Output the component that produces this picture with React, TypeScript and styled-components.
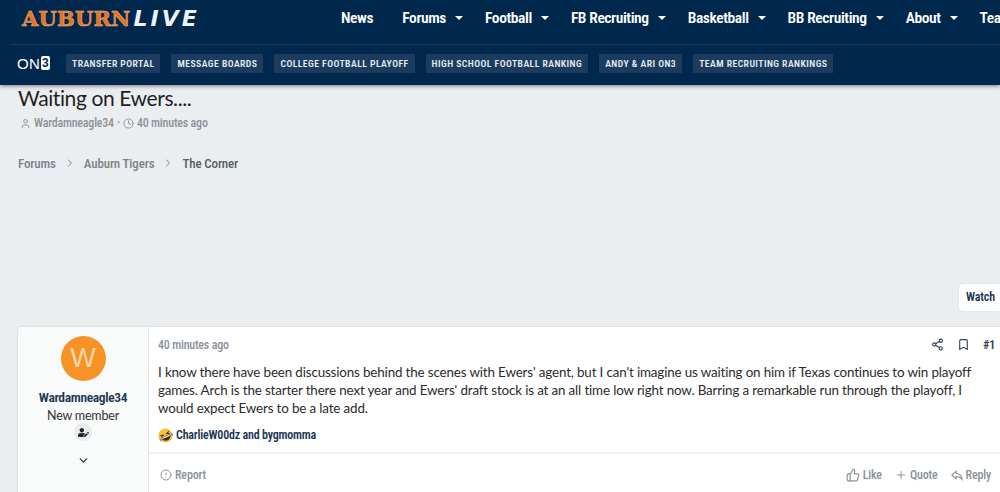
import React from "react";
import styled, { createGlobalStyle } from "styled-components";
import { Bookmark, ChevronDown, ChevronRight, CircleAlert, Clock, Plus, Share2, ThumbsUp, User } from "lucide-react";
import { FaUserEdit } from "react-icons/fa";

const narrow = `"Roboto", "Liberation Sans", sans-serif`;
const body = `"Lato", "Open Sans", sans-serif`;

const Global = createGlobalStyle`
  html, body {
    margin: 0;
    height: 492px;
    overflow: hidden;
    background: #ebeef1;
  }
  * { box-sizing: border-box; }
`;

const Header = styled.header`
  position: relative;
  z-index: 2;
  height: 85px;
  padding: 0 0 0 11px;
  background: #00274c;
  box-shadow: 0 1px 4px rgba(0, 0, 0, 0.5);
  overflow: hidden;
`;

const TopRow = styled.div`
  display: flex;
  align-items: center;
  height: 45px;
  padding: 0 0 8px 11px;
  border-bottom: 1px solid #1b3c5f;
  white-space: nowrap;
`;

const Logo = styled.div`
  display: flex;
  align-items: baseline;
  width: 319px;
  flex: none;
`;

const LogoMain = styled.span`
  font: 900 21px "DejaVu Serif", serif;
  letter-spacing: 0.2px;
  color: #e8721c;
  -webkit-text-stroke: 0.5px #f0b98c;
`;

const LogoLive = styled.span`
  margin-left: 3px;
  font: italic 800 22px "DejaVu Sans", sans-serif;
  letter-spacing: 3px;
  color: #eef2f6;
`;

const Nav = styled.nav`
  display: flex;
  align-items: center;
  gap: 22px;
  font: 600 15.5px ${narrow};
  font-stretch: 75%;
  letter-spacing: -0.4px;
  color: #fff;
`;

const NavItem = styled.a`
  display: flex;
  align-items: center;
  gap: 9px;

  &:first-child {
    margin-right: 7px;
  }
`;

const Caret = styled.i`
  width: 0;
  height: 0;
  border-left: 4px solid transparent;
  border-right: 4px solid transparent;
  border-top: 4px solid #fff;
`;

const SubRow = styled.div`
  display: flex;
  align-items: center;
  gap: 11px;
  height: 40px;
  padding: 0 0 4px 6px;
`;

const On3 = styled.div`
  display: flex;
  align-items: center;
  width: 38px;
  flex: none;
  font: 400 15px "Liberation Sans", sans-serif;
  letter-spacing: 0.3px;
  color: #fff;
`;

const On3Mark = styled.b`
  margin-left: 1px;
  padding: 0 1px;
  border-radius: 2px;
  background: #fff;
  color: #00274c;
  font: 800 12px/14px "Liberation Sans", sans-serif;
`;

const Pill = styled.a`
  height: 19px;
  padding: 0 6px;
  background: #1b3c5f;
  font: 600 9.7px/19px ${narrow};
  font-stretch: 75%;
  letter-spacing: 0.45px;
  color: #e6ebf0;
  white-space: nowrap;
`;

const Page = styled.main`
  padding-left: 18px;
`;

const Title = styled.h1`
  margin: 0;
  font: 400 21px/26px ${body};
  letter-spacing: -0.4px;
  color: #1f1f1f;
`;

const Meta = styled.div`
  display: flex;
  align-items: center;
  gap: 3px;
  margin-top: 4px;
  height: 16px;
  padding-left: 2px;
  font: 500 12px ${narrow};
  font-stretch: 75%;
  letter-spacing: -0.2px;
  color: #8b9199;
  svg { flex: none; }
`;

const Crumbs = styled.div`
  display: flex;
  align-items: center;
  gap: 8px;
  margin-top: 23px;
  height: 18px;
  font: 500 13px ${narrow};
  font-stretch: 75%;
  letter-spacing: -0.15px;
  color: #7b828a;
`;

const Current = styled.span`
  color: #575e66;
`;

const WatchRow = styled.div`
  display: flex;
  justify-content: flex-end;
  margin-top: 112px;
`;

const Watch = styled.a`
  width: 41px;
  height: 27px;
  padding-left: 7px;
  border-radius: 4px 0 0 4px;
  background: #fff;
  box-shadow: 0 0 1px rgba(0, 0, 0, 0.2);
  font: 600 12px/27px ${narrow};
  font-stretch: 75%;
  letter-spacing: -0.1px;
  color: #1b3552;
`;

const Card = styled.article`
  display: flex;
  height: 170px;
  margin-top: 16px;
  border-radius: 4px 0 0 0;
  background: #fff;
  box-shadow: 0 0 2px rgba(0, 0, 0, 0.18);
  overflow: hidden;
`;

const Side = styled.aside`
  display: flex;
  flex-direction: column;
  align-items: center;
  width: 131px;
  flex: none;
  padding-top: 9px;
  background: #f9fafa;
  border-right: 1px solid #e6e9ec;
`;

const Avatar = styled.div`
  width: 45px;
  height: 45px;
  border-radius: 50%;
  background: #f79226;
  font: 400 27px/45px "Liberation Sans", sans-serif;
  text-align: center;
  color: #fcd7ab;
`;

const Name = styled.a`
  margin-top: 7px;
  font: 600 13.5px/18px ${narrow};
  font-stretch: 75%;
  letter-spacing: -0.35px;
  color: #1b3552;
`;

const Role = styled.div`
  margin-top: 1px;
  font: 400 12.5px/17px ${body};
  letter-spacing: -0.2px;
  color: #333;
`;

const Badge = styled.div`
  display: flex;
  align-items: center;
  justify-content: center;
  width: 18px;
  height: 18px;
  margin-top: -1px;
  border-radius: 50%;
  background: #e9ebed;
  color: #1c2530;
`;

const Expand = styled.div`
  display: flex;
  margin-top: 13px;
  color: #1b3552;
`;

const Main = styled.section`
  flex: 1;
  min-width: 0;
  display: flex;
  flex-direction: column;
`;

const PostHead = styled.div`
  display: flex;
  align-items: center;
  justify-content: space-between;
  height: 37px;
  padding: 0 5px 1px 9px;
`;

const Time = styled.span`
  font: 500 12px ${narrow};
  font-stretch: 75%;
  letter-spacing: -0.2px;
  color: #8b9199;
`;

const Tools = styled.div`
  display: flex;
  align-items: center;
  gap: 13px;
  font: 600 12px ${narrow};
  font-stretch: 75%;
  letter-spacing: -0.2px;
  color: #2e4058;
`;

const Text = styled.p`
  margin: 0;
  height: 54px;
  padding: 0 5px 0 9px;
  font: 400 13.4px/18px ${body};
  letter-spacing: -0.15px;
  color: #2b2b2b;
  white-space: nowrap;
`;

const Reactions = styled.div`
  display: flex;
  align-items: center;
  gap: 3px;
  height: 20px;
  margin-top: 8px;
  padding-left: 9px;
  font: 600 12px ${narrow};
  font-stretch: 75%;
  letter-spacing: -0.2px;
  color: #1b3552;
`;

const Actions = styled.div`
  display: flex;
  align-items: center;
  justify-content: space-between;
  height: 46px;
  margin-top: 7px;
  padding: 0 9px 0 11px;
  border-top: 2px solid #eff1f3;
  font: 500 12px ${narrow};
  font-stretch: 75%;
  letter-spacing: -0.15px;
  color: #8b9199;
`;

const ActionGroup = styled.div`
  display: flex;
  align-items: center;
  gap: 13px;
`;

const Action = styled.a`
  display: flex;
  align-items: center;
  gap: 3px;
`;

const navItems = ["Forums", "Football", "FB Recruiting", "Basketball", "BB Recruiting", "About"];
const pills = [
  "TRANSFER PORTAL",
  "MESSAGE BOARDS",
  "COLLEGE FOOTBALL PLAYOFF",
  "HIGH SCHOOL FOOTBALL RANKING",
  "ANDY & ARI ON3",
  "TEAM RECRUITING RANKINGS",
];

function LaughEmoji() {
  return (
    <svg width="15" height="15" viewBox="0 0 16 16">
      <g transform="rotate(-25 8 8)">
        <circle cx="8" cy="8" r="7.5" fill="#fbc02d" />
        <path d="M3 8.5h10c0 3-2.2 5-5 5s-5-2-5-5z" fill="#3e2723" />
        <path d="M3.8 9h8.4v1.2H3.8z" fill="#fff" />
        <path d="M3 5.5l3 1.2-3 1M13 5.5l-3 1.2 3 1" fill="none" stroke="#3e2723" strokeWidth="1" />
        <path d="M1 8c-1 1-1 3 0 3.4 1 .2 1.6-1 1.2-2.2zM15 8c1 1 1 3 0 3.4-1 .2-1.6-1-1.2-2.2z" fill="#42a5f5" />
      </g>
    </svg>
  );
}

function ReplyArrow() {
  return (
    <svg width="12" height="11" viewBox="0 0 13 11" fill="none" stroke="#8b9199" strokeWidth="1.2">
      <path d="M5.5 1 1 5l4.5 4V6.6c3 0 5 .6 6.5 3 0-3-2-6-6.5-6.2z" />
    </svg>
  );
}

export default function App() {
  return (
    <>
      <Global />
      <Header>
        <TopRow>
          <Logo>
            <LogoMain>AUBURN</LogoMain>
            <LogoLive>LIVE</LogoLive>
          </Logo>
          <Nav>
            <NavItem>News</NavItem>
            {navItems.map((item) => (
              <NavItem key={item}>
                {item}
                <Caret />
              </NavItem>
            ))}
            <NavItem>Team</NavItem>
          </Nav>
        </TopRow>
        <SubRow>
          <On3>
            ON<On3Mark>3</On3Mark>
          </On3>
          {pills.map((pill) => (
            <Pill key={pill}>{pill}</Pill>
          ))}
        </SubRow>
      </Header>
      <Page>
        <Title>Waiting on Ewers....</Title>
        <Meta>
          <User size={11} />
          <span>Wardamneagle34</span>
          <span>·</span>
          <Clock size={11} />
          <span>40 minutes ago</span>
        </Meta>
        <Crumbs>
          <span>Forums</span>
          <ChevronRight size={12} />
          <span>Auburn Tigers</span>
          <ChevronRight size={12} />
          <Current>The Corner</Current>
        </Crumbs>
        <WatchRow>
          <Watch>Watch</Watch>
        </WatchRow>
        <Card>
          <Side>
            <Avatar>W</Avatar>
            <Name>Wardamneagle34</Name>
            <Role>New member</Role>
            <Badge>
              <FaUserEdit size={11} />
            </Badge>
            <Expand>
              <ChevronDown size={13} strokeWidth={2.2} />
            </Expand>
          </Side>
          <Main>
            <PostHead>
              <Time>40 minutes ago</Time>
              <Tools>
                <Share2 size={13} strokeWidth={2} />
                <Bookmark size={13} strokeWidth={2} />
                <span>#1</span>
              </Tools>
            </PostHead>
            <Text>
              I know there have been discussions behind the scenes with Ewers' agent, but I can't imagine us waiting on him if Texas continues to win playoff
              <br />
              games. Arch is the starter there next year and Ewers' draft stock is at an all time low right now. Barring a remarkable run through the playoff, I
              <br />
              would expect Ewers to be a late add.
            </Text>
            <Reactions>
              <LaughEmoji />
              <span>CharlieW00dz and bygmomma</span>
            </Reactions>
            <Actions>
              <Action>
                <CircleAlert size={12} />
                Report
              </Action>
              <ActionGroup>
                <Action>
                  <ThumbsUp size={14} />
                  Like
                </Action>
                <Action>
                  <Plus size={12} />
                  Quote
                </Action>
                <Action>
                  <ReplyArrow />
                  Reply
                </Action>
              </ActionGroup>
            </Actions>
          </Main>
        </Card>
      </Page>
    </>
  );
}
